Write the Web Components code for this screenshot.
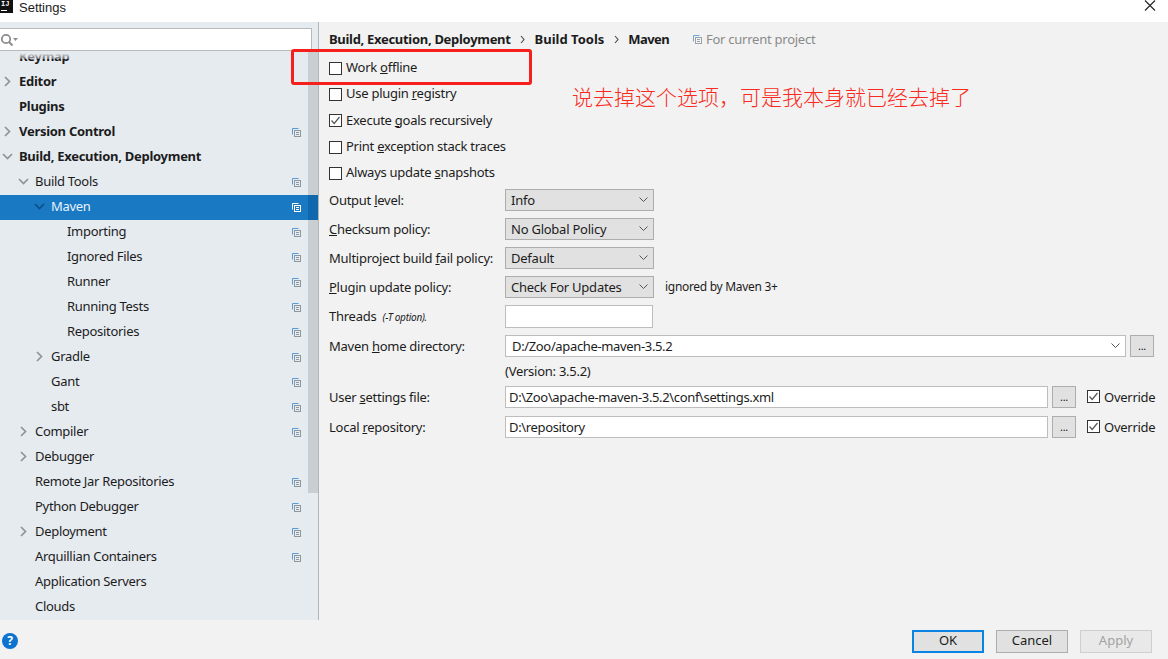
<!DOCTYPE html>
<html>
<head>
<meta charset="utf-8">
<title>Settings</title>
<style>
  html, body { margin: 0; padding: 0; height: 100%; overflow: hidden; background: #f2f2f2; }
  body { font: 13px "Noto Sans", "Noto Sans CJK SC", sans-serif; color: #1c1c1c; }
</style>
</head>
<body>
<settings-dialog>
  <settings-tree slot="sidebar">
    <tree-item bold>Keymap</tree-item>
    <tree-item bold arrow="right">Editor</tree-item>
    <tree-item bold>Plugins</tree-item>
    <tree-item bold arrow="right" copy>Version Control</tree-item>
    <tree-item bold arrow="down">Build, Execution, Deployment</tree-item>
    <tree-item level="1" arrow="down" copy>Build Tools</tree-item>
    <tree-item level="2" arrow="down" copy selected>Maven</tree-item>
    <tree-item level="3" copy>Importing</tree-item>
    <tree-item level="3" copy>Ignored Files</tree-item>
    <tree-item level="3" copy>Runner</tree-item>
    <tree-item level="3" copy>Running Tests</tree-item>
    <tree-item level="3" copy>Repositories</tree-item>
    <tree-item level="2" arrow="right" copy>Gradle</tree-item>
    <tree-item level="2" copy>Gant</tree-item>
    <tree-item level="2" copy>sbt</tree-item>
    <tree-item level="1" arrow="right" copy>Compiler</tree-item>
    <tree-item level="1" arrow="right">Debugger</tree-item>
    <tree-item level="1" copy>Remote Jar Repositories</tree-item>
    <tree-item level="1" copy>Python Debugger</tree-item>
    <tree-item level="1" arrow="right" copy>Deployment</tree-item>
    <tree-item level="1" copy>Arquillian Containers</tree-item>
    <tree-item level="1">Application Servers</tree-item>
    <tree-item level="1">Clouds</tree-item>
  </settings-tree>

  <crumb-bar></crumb-bar>

  <check-row>Work <u>o</u>ffline</check-row>
  <check-row>Use plugin <u>r</u>egistry</check-row>
  <check-row checked>Execute <u>g</u>oals recursively</check-row>
  <check-row>Print <u>e</u>xception stack traces</check-row>
  <check-row>Always update <u>s</u>napshots</check-row>

  <form-row style="margin-top:2.5px"><span slot="label">Output <u>l</u>evel:</span><combo-box>Info</combo-box></form-row>
  <form-row><span slot="label"><u>C</u>hecksum policy:</span><combo-box>No Global Policy</combo-box></form-row>
  <form-row><span slot="label">Multiproject build <u>f</u>ail policy:</span><combo-box>Default</combo-box></form-row>
  <form-row><span slot="label"><u>P</u>lugin update policy:</span><combo-box>Check For Updates</combo-box><span style="margin-left:11px;font-size:12px;letter-spacing:-.3px">ignored by Maven 3+</span></form-row>
  <form-row tall><span slot="label">Threads <i style="font-size:10px;margin-left:3px">(-T option).</i></span><text-field style="width:148px;flex:none"></text-field></form-row>
  <form-row flush style="margin-right:1px"><span slot="label">Maven <u>h</u>ome directory:</span><text-field style="flex:1" pad="6" drop>D:/Zoo/apache-maven-3.5.2</text-field><push-button small>...</push-button></form-row>
  <form-row spacer><span style="margin-top:-1px">(Version: 3.5.2)</span></form-row>
  <form-row flush><span slot="label">User <u>s</u>ettings file:</span><text-field style="flex:1">D:\Zoo\apache-maven-3.5.2\conf\settings.xml</text-field><push-button small>...</push-button><check-row inline checked>Override</check-row></form-row>
  <form-row flush><span slot="label">Local <u>r</u>epository:</span><text-field style="flex:1">D:\repository</text-field><push-button small>...</push-button><check-row inline checked>Override</check-row></form-row>

  <dialog-footer slot="footer"></dialog-footer>
  <red-note slot="overlay"></red-note>
</settings-dialog>

<script>
const fontStack = '"Noto Sans", "Noto Sans CJK SC", sans-serif';

class SettingsDialog extends HTMLElement {
  connectedCallback() {
    this.attachShadow({ mode: 'open' });
    this.shadowRoot.innerHTML = `
      <style>
        :host { display: flex; flex-direction: column; position: relative; width: 1168px; height: 659px; overflow: hidden; background: #f2f2f2; }
        .title { height: 22px; background: #fff; display: flex; align-items: flex-start; flex: none; }
        .logo { width: 13px; height: 13px; background: #111; color: #fff; font: bold 7px "Liberation Mono", monospace; box-sizing: border-box; padding-left: 1px; line-height: 8px; position: relative; }
        .logo::after { content: ""; position: absolute; left: 1px; bottom: 2px; width: 6px; height: 1px; background: #fff; }
        .name { margin-left: 6px; font-family: "Liberation Sans", sans-serif; line-height: 15px; }
        .close { margin-left: auto; margin-right: 12px; width: 12px; height: 12px; }
        .main { flex: 1; display: flex; min-height: 0; }
        .side { width: 318px; flex: none; border-right: 1px solid #b4b4b4; background: #e6ebf0; }
        .panel { flex: 1; padding-left: 10px; padding-right: 13px; min-width: 0; letter-spacing: -.26px; }
      </style>
      <div class="title">
        <div class="logo">IJ</div>
        <div class="name">Settings</div>
        <svg class="close" viewBox="0 0 12 12"><path d="M1 0.5 11 10.5M11 0.5 1 10.5" stroke="#222" stroke-width="1.1" fill="none"/></svg>
      </div>
      <div class="main">
        <div class="side"><slot name="sidebar"></slot></div>
        <div class="panel"><slot></slot></div>
      </div>
      <slot name="footer"></slot>
      <slot name="overlay"></slot>`;
  }
}

class SettingsTree extends HTMLElement {
  connectedCallback() {
    this.attachShadow({ mode: 'open' });
    this.shadowRoot.innerHTML = `
      <style>
        :host { display: flex; flex-direction: column; height: 100%; position: relative; }
        .search { height: 29px; flex: none; padding-top: 6px; box-sizing: border-box; }
        .box { width: 312px; height: 23px; box-sizing: border-box; background: #fff; border: 1px solid #b9b9b9; border-left: 0; display: flex; align-items: center; }
        .list { flex: 1; overflow: hidden; min-height: 0; position: relative; }
        .list::after { content: ""; position: absolute; left: 0; right: 10px; top: 0; height: 8px; background: linear-gradient(#e6ebf0 25%, rgba(230,235,240,.35)); }
        .scroll { margin-top: -6px; }
        .thumb { position: absolute; right: 0; top: 29px; width: 10px; height: 442px; background: #c9ced3; }
      </style>
      <div class="search"><div class="box">
        <svg width="18" height="14" viewBox="0 0 18 14"><circle cx="6" cy="6" r="4.2" fill="none" stroke="#8c8c8c" stroke-width="1.8"/><path d="M9 9 12.5 12.5" stroke="#8c8c8c" stroke-width="2"/><path d="M13 5h5l-2.5 3z" fill="#8c8c8c"/></svg>
      </div></div>
      <div class="thumb"></div>
      <div class="list"><div class="scroll"><slot></slot></div></div>`;
  }
}

class TreeItem extends HTMLElement {
  connectedCallback() {
    const level = Number(this.getAttribute('level') || 0);
    const arrow = this.getAttribute('arrow');
    const selected = this.hasAttribute('selected');
    const bold = this.hasAttribute('bold');
    const arrowColor = selected ? '#0d4f86' : '#8e9398';
    const iconColor = selected ? '#fff' : '#8d979f';
    const iconBlue = selected ? '#fff' : '#5b9bd5';
    let glyph = '';
    if (arrow === 'right') glyph = `<svg width="9" height="11" viewBox="0 0 9 11"><path d="M2 1 6.5 5.5 2 10" fill="none" stroke="${arrowColor}" stroke-width="1.7"/></svg>`;
    if (arrow === 'down') glyph = `<svg width="11" height="9" viewBox="0 0 11 9"><path d="M1 2 5.5 6.5 10 2" fill="none" stroke="${arrowColor}" stroke-width="1.7"/></svg>`;
    this.attachShadow({ mode: 'open' });
    this.shadowRoot.innerHTML = `
      <style>
        :host { display: block; }
        .row { height: 25px; box-sizing: border-box; padding-bottom: 3px; display: flex; align-items: center; position: relative; white-space: nowrap; padding-left: ${1 + 16 * level}px; color: ${selected ? '#e8f3fc' : '#1c1c1c'}; font-weight: ${bold ? 700 : 400}; letter-spacing: ${bold ? '-.28px' : '-.3px'}; }
        .row.sel { background: linear-gradient(to right, #1a79c3 308px, #0f67ad 308px); }
        .arrow { width: 12px; margin-right: 6px; display: flex; justify-content: center; flex: none; }
        .copy { position: absolute; left: 292px; top: 8px; width: 9px; height: 9px; }
      </style>
      <div class="row ${selected ? 'sel' : ''}">
        <span class="arrow">${glyph}</span><span><slot></slot></span>
        ${this.hasAttribute('copy') ? `<svg class="copy" viewBox="0 0 9 9"><path d="M.5 6.5V.5h6" fill="none" stroke="${iconBlue}"/><rect x="2.5" y="2.5" width="6" height="6" fill="none" stroke="${iconColor}"/><path d="M4 4.5h3M4 6.5h3" stroke="${iconColor}"/></svg>` : ''}
      </div>`;
  }
}

class CrumbBar extends HTMLElement {
  connectedCallback() {
    this.attachShadow({ mode: 'open' });
    const chev = `<svg width="5" height="9" viewBox="0 0 5 9" style="margin:0 9.5px"><path d="M1 1 4 4.5 1 8" fill="none" stroke="#444" stroke-width="1.1"/></svg>`;
    this.shadowRoot.innerHTML = `
      <style>
        :host { display: flex; align-items: center; height: 33px; box-sizing: border-box; font-weight: 700; white-space: nowrap; padding-top: 1px; letter-spacing: -.3px; }
        .proj { font-weight: 400; color: #8a8a8a; margin-left: 24px; display: flex; align-items: center; letter-spacing: -.25px; }
        .proj svg { margin-right: 4px; }
      </style>
      <span>Build, Execution, Deployment</span>${chev}<span style="letter-spacing:0">Build Tools</span>${chev}<span style="letter-spacing:-.6px">Maven</span>
      <span class="proj"><svg width="9" height="9" viewBox="0 0 9 9"><path d="M.5 6.5V.5h6" fill="none" stroke="#6fa6d8"/><rect x="2.5" y="2.5" width="6" height="6" fill="none" stroke="#9aa3aa"/><path d="M4 4.5h3M4 6.5h3" stroke="#9aa3aa"/></svg>For current project</span>`;
  }
}

class CheckRow extends HTMLElement {
  connectedCallback() {
    this.attachShadow({ mode: 'open' });
    const tick = this.hasAttribute('checked') ? '<svg width="11" height="11" viewBox="0 0 11 11"><path d="M1.5 5.5 4.2 8.5 9.5 2" fill="none" stroke="#555" stroke-width="1.2"/></svg>' : '';
    const inline = this.hasAttribute('inline');
    this.shadowRoot.innerHTML = `
      <style>
        :host { display: flex; align-items: center; height: ${inline ? '22px' : '26.3px'}; white-space: nowrap; ${inline ? 'margin-left:11px;width:68px;flex:none;' : ''} }
        .box { width: 13px; height: 13px; box-sizing: border-box; border: 1px solid #333; background: #fff; margin-right: 4px; display: flex; align-items: center; justify-content: center; flex: none; }
        .text { margin-top: ${inline ? 0 : -2}px; }
      </style>
      <span class="box">${tick}</span><span class="text"><slot></slot></span>`;
  }
}

class FormRow extends HTMLElement {
  connectedCallback() {
    this.attachShadow({ mode: 'open' });
    const spacer = this.hasAttribute('spacer');
    const flush = this.hasAttribute('flush');
    const h = spacer ? 29 : this.hasAttribute('tall') ? 23 : 22;
    const next = this.nextElementSibling;
    const mb = spacer ? 0 : flush ? (next && next.hasAttribute('flush') ? 8 : 0) : 7;
    this.shadowRoot.innerHTML = `
      <style>
        :host { display: flex; align-items: stretch; height: ${h}px; margin-bottom: ${mb}px; white-space: nowrap; }
        .label { width: 176px; flex: none; display: flex; align-items: center; }
        .rest { flex: 1; display: flex; align-items: center; min-width: 0; }
      </style>
      <div class="label"><slot name="label"></slot></div>
      <div class="rest"><slot></slot></div>`;
  }
}

class ComboBox extends HTMLElement {
  connectedCallback() {
    this.attachShadow({ mode: 'open' });
    this.shadowRoot.innerHTML = `
      <style>
        :host { display: flex; align-items: center; justify-content: space-between; width: 149px; height: 22px; box-sizing: border-box; border: 1px solid #adadad; background: #e1e1e1; padding: 0 5px; flex: none; letter-spacing: -.24px; }
      </style>
      <span><slot></slot></span>
      <svg width="9" height="6" viewBox="0 0 9 6"><path d="M.5.5 4.5 4.5 8.5.5" fill="none" stroke="#555" stroke-width="1"/></svg>`;
  }
}

class TextField extends HTMLElement {
  connectedCallback() {
    const pad = this.getAttribute('pad') || 3;
    this.attachShadow({ mode: 'open' });
    this.shadowRoot.innerHTML = `
      <style>
        :host { display: flex; align-items: center; justify-content: space-between; align-self: stretch; box-sizing: border-box; border: 1px solid #bdbdbd; background: #fff; padding: 0 5px 0 ${pad}px; min-width: 0; letter-spacing: -.35px; }
      </style>
      <span><slot></slot></span>
      ${this.hasAttribute('drop') ? '<svg width="9" height="6" viewBox="0 0 9 6"><path d="M.5.5 4.5 4.5 8.5.5" fill="none" stroke="#555" stroke-width="1"/></svg>' : ''}`;
  }
}

class PushButton extends HTMLElement {
  connectedCallback() {
    this.attachShadow({ mode: 'open' });
    const small = this.hasAttribute('small');
    const state = this.getAttribute('state');
    const border = state === 'default' ? '2px solid #0a84e3' : state === 'disabled' ? '1px solid #cfcfcf' : '1px solid #adadad';
    this.shadowRoot.innerHTML = `
      <style>
        :host { display: flex; align-items: center; justify-content: center; flex: none; box-sizing: border-box; width: ${small ? 24 : 72}px; height: ${small ? 22 : 23}px; margin-left: ${small ? 4 : 0}px; border: ${border}; background: ${state === 'disabled' ? '#e9e9e9' : '#e1e1e1'}; color: ${state === 'disabled' ? '#a3a3a3' : '#1c1c1c'}; ${small ? 'font-size:11px;' : 'padding-bottom:3px;'} }
      </style>
      <slot></slot>`;
  }
}

class DialogFooter extends HTMLElement {
  connectedCallback() {
    this.attachShadow({ mode: 'open' });
    this.shadowRoot.innerHTML = `
      <style>
        :host { display: flex; align-items: flex-start; height: 39px; flex: none; box-sizing: border-box; padding: 10px 16px 0 2px; gap: 12px; }
        .help { width: 16px; height: 16px; border-radius: 50%; background: #0e72cf; color: #fff; font: bold 12px/16px ${fontStack}; text-align: center; margin: 3px auto 0 0; }
      </style>
      <div class="help">?</div>
      <push-button state="default">OK</push-button>
      <push-button>Cancel</push-button>
      <push-button state="disabled">Apply</push-button>`;
  }
}

class RedNote extends HTMLElement {
  connectedCallback() {
    this.attachShadow({ mode: 'open' });
    this.shadowRoot.innerHTML = `
      <style>
        :host { display: block; }
        .frame { position: absolute; left: 291px; top: 49px; width: 241px; height: 36px; box-sizing: border-box; border: 3px solid #f5201c; border-radius: 3px; }
        .text { position: absolute; left: 572px; top: 82px; font: 300 21px/28px "Noto Sans CJK SC", sans-serif; color: #fb2a20; white-space: nowrap; }
      </style>
      <div class="frame"></div>
      <div class="text">说去掉这个选项，可是我本身就已经去掉了</div>`;
  }
}

customElements.define('push-button', PushButton);
customElements.define('tree-item', TreeItem);
customElements.define('settings-tree', SettingsTree);
customElements.define('crumb-bar', CrumbBar);
customElements.define('check-row', CheckRow);
customElements.define('form-row', FormRow);
customElements.define('combo-box', ComboBox);
customElements.define('text-field', TextField);
customElements.define('dialog-footer', DialogFooter);
customElements.define('red-note', RedNote);
customElements.define('settings-dialog', SettingsDialog);
</script>
</body>
</html>
